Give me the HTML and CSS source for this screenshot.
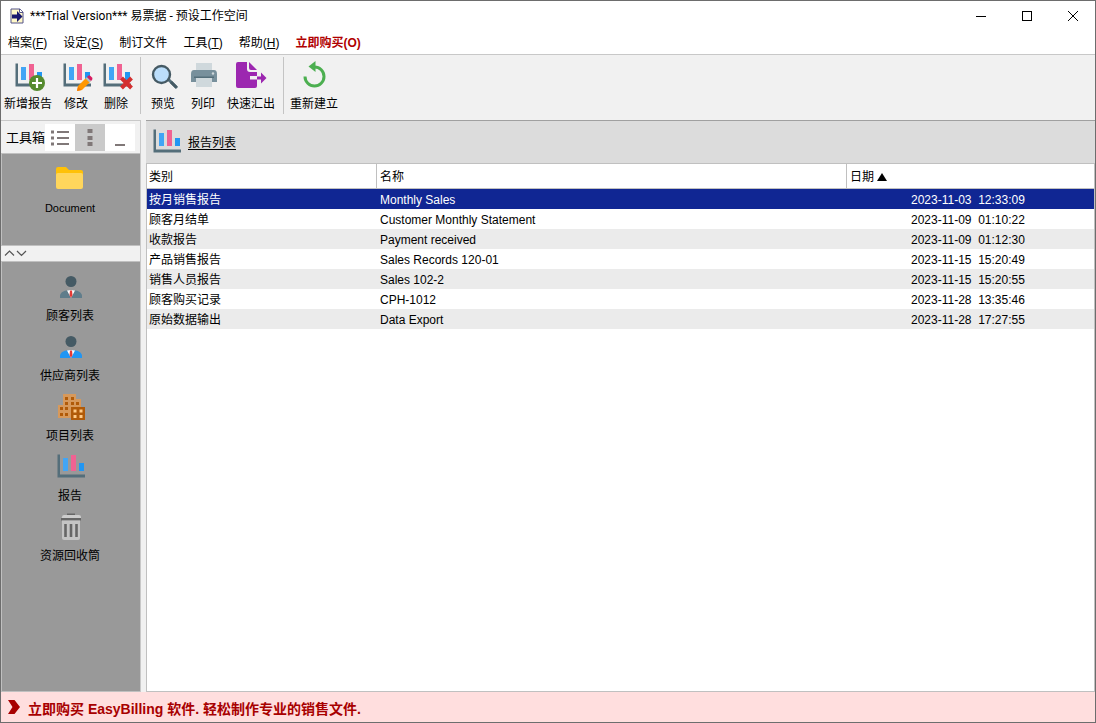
FILE: index.html
```
<!DOCTYPE html>
<html lang="zh-CN">
<head>
<meta charset="utf-8">
<title>易票据 - 预设工作空间</title>
<link rel="stylesheet" href="styles.css">
</head>
<body>
<svg class="symbols" aria-hidden="true">
  <symbol id="chart" viewBox="0 0 32 32">
    <rect x="9" y="7" width="5" height="13" fill="#42a5f5"/>
    <rect x="17" y="4" width="5" height="16" fill="#f06292"/>
    <rect x="25" y="12" width="5" height="8" fill="#2196f3"/>
    <path d="M3.500 3.500H6V23.500H31V26.500H3.500Z" fill="#546e7a"/>
  </symbol>
  <symbol id="person" viewBox="0 0 32 32">
    <circle cx="17" cy="10.500" r="5.500" fill="#455a64"/>
    <path d="M6 27V25C6 21 11 19 17 19S28 21 28 25V27Z" fill="currentColor"/>
    <path d="M13 19.500L17 27L21 19.500L17 19Z" fill="#fff"/>
    <path d="M16 19.500H18L18.500 24L17 27L15.500 24Z" fill="#e53935"/>
  </symbol>
</svg>
<div class="window">
  <header class="titlebar">
    <svg class="app-icon" viewBox="0 0 14 16"><path d="M1 1H10L13 4V15H1Z" fill="#fff8c8" stroke="#55558a"/><path d="M9.500 1V4.500H13" fill="#fff" stroke="#55558a"/><path d="M2 6.500H7V3L12.500 8.500L7 14V10.500H2Z" fill="#17176e"/></svg>
    <h1 class="title">***Trial Version*** 易票据 - 预设工作空间</h1>
    <button class="win-btn" aria-label="最小化"><svg viewBox="0 0 12 12"><path d="M1 6.500H11" stroke="#000"/></svg></button>
    <button class="win-btn" aria-label="最大化"><svg viewBox="0 0 12 12"><rect x="1.500" y="1.500" width="9" height="9" fill="none" stroke="#000"/></svg></button>
    <button class="win-btn" aria-label="关闭"><svg viewBox="0 0 12 12"><path d="M1 1L11 11M11 1L1 11" stroke="#000"/></svg></button>
  </header>
  <nav class="menu">
    <button>档案(<u>F</u>)</button>
    <button>设定(<u>S</u>)</button>
    <button>制订文件</button>
    <button>工具(<u>T</u>)</button>
    <button>帮助(<u>H</u>)</button>
    <button class="buy">立即购买(O)</button>
  </nav>
  <div class="toolbar">
    <div class="tools">
      <button class="wide"><svg class="icon" viewBox="0 0 32 32"><use href="#chart"/><circle cx="25" cy="23" r="8" fill="#558b2f"/><path d="M25 18V28M20 23H30" stroke="#fff" stroke-width="2.200"/></svg>新增报告</button>
      <button><svg class="icon" viewBox="0 0 32 32"><use href="#chart"/><path d="M17 31L18 26L26.500 17.500L30.500 21.500L22 30Z" fill="#ff9800"/><path d="M17 31L18 26.500L21.500 30Z" fill="#f57c00"/><path d="M25.500 18.500L27 17L31 21L29.500 22.500Z" fill="#b0bec5"/><path d="M27 17L28.500 15.500Q29.500 15 30.500 16L32 17.500Q33 18.500 32 20L31 21Z" fill="#d81b60"/></svg>修改</button>
      <button><svg class="icon" viewBox="0 0 32 32"><use href="#chart"/><path d="M21.500 18L31.500 28M31.500 18L21.500 28" stroke="#d32f2f" stroke-width="4"/></svg>删除</button>
    </div>
    <div class="tools">
      <button><svg class="icon" viewBox="0 0 32 32"><path d="M21 19L30 28" stroke="#546e7a" stroke-width="3"/><path d="M24 22L29.500 27.500" stroke="#455a64" stroke-width="3"/><circle cx="14.500" cy="14.500" r="8.500" fill="#bbdefb" stroke="#455a64" stroke-width="2.400"/></svg>预览</button>
      <button><svg class="icon" viewBox="0 0 32 32"><path d="M9 3H25V12H9Z" fill="#cfd8dc"/><path d="M4 14Q4 10 7 10H27Q30 10 30 14V22H4Z" fill="#78909c"/><path d="M9 18H25V27H9Z" fill="#cfd8dc"/><path d="M7 16.500H27V18H7Z" fill="#546e7a"/><circle cx="26" cy="13.500" r="1.200" fill="#cfd8dc"/></svg>列印</button>
      <button class="wide"><svg class="icon" viewBox="0 0 32 32"><path d="M3 2H12V9Q12 12 15 12H22V16H15V19.500H22V26Q22 28 20 28H3Q1 28 1 26V4Q1 2 3 2Z" fill="#9c27b0"/><path d="M14 2L22 10H16Q14 10 14 8Z" fill="#9c27b0"/><path d="M22 16.500H26V12.500L31.500 18L26 23.500V19.500H22Z" fill="#9c27b0"/></svg>快速汇出</button>
    </div>
    <div class="tools">
      <button class="wide"><svg class="icon" viewBox="0 0 32 32"><path d="M16.500 7A9.500 9.500 0 1 1 7 16.500" fill="none" stroke="#4caf50" stroke-width="3"/><path d="M17.500 1V12L10.500 6.500Z" fill="#4caf50"/></svg>重新建立</button>
    </div>
  </div>
  <div class="workspace">
    <aside class="sidebar">
      <div class="side-head">
        <span class="side-title">工具箱</span>
        <button aria-label="列表"><svg viewBox="0 0 18 16"><path d="M0 3H3M0 9H3M0 15H3" stroke="#807878" stroke-width="3"/><path d="M6 3H18M6 9H18M6 15H18" stroke="#807878" stroke-width="2"/></svg></button>
        <button class="on" aria-label="图标"><svg viewBox="0 0 18 16"><path d="M9 0V4M9 7V11M9 13V17" stroke="#807878" stroke-width="5"/></svg></button>
        <button aria-label="收起"><svg viewBox="0 0 18 16"><path d="M4 16H14" stroke="#807878" stroke-width="2"/></svg></button>
      </div>
      <div class="panel">
        <button class="item"><svg class="icon" viewBox="0 0 32 32"><path d="M2 6Q2 4 4 4H12L15 7H27Q29 7 29 9V18H2Z" fill="#ffc107"/><path d="M2 11.500Q2 10 4 10H27Q29 10 29 12V24Q29 26 27 26H4Q2 26 2 24Z" fill="#ffd65c"/></svg><span class="latin">Document</span></button>
      </div>
      <div class="splitter"><svg viewBox="0 0 24 8"><path d="M1 6.500L5.500 2L10 6.500M13 2L17.500 6.500L22 2" fill="none" stroke="#555" stroke-width="1.200"/></svg></div>
      <div class="panel grow">
        <button class="item gray"><svg class="icon"><use href="#person"/></svg>顾客列表</button>
        <button class="item blue"><svg class="icon"><use href="#person"/></svg>供应商列表</button>
        <button class="item"><svg class="icon" viewBox="0 0 32 32"><path d="M9 3H22V8H27V27H4V14H9Z" fill="#d7995b"/><path d="M17 16H31V29H17Z" fill="#b05a08"/><path d="M11 6H14V9H11ZM17 6H20V9H17ZM11 11H14V14H11ZM17 11H20V14H17ZM22 11H25V14H22ZM6 16H9V19H6ZM11 16H14V19H11ZM6 22H9V25H6ZM11 22H14V25H11Z" fill="#b05a08"/><path d="M19.500 18.500H22.500V21.500H19.500ZM25.500 18.500H28.500V21.500H25.500ZM19.500 24H22.500V27H19.500ZM25.500 24H28.500V27H25.500Z" fill="#ffca86"/></svg>项目列表</button>
        <button class="item"><svg class="icon"><use href="#chart"/></svg>报告</button>
        <button class="item"><svg class="icon" viewBox="0 0 32 32"><path d="M13 4.500V2.500H21V4.500" fill="#666"/><path d="M8 6Q8 4 10 4H25Q27 4 27 6V8H7Z" fill="#ccc"/><path d="M7 7H27V9.500H7Z" fill="#666"/><path d="M8 9.500H26V27Q26 29 24 29H10Q8 29 8 27Z" fill="#c4c4c4"/><path d="M11.500 13V26M17 13V26M22.500 13V26" stroke="#666" stroke-width="2.600"/></svg>资源回收筒</button>
      </div>
    </aside>
    <main class="main">
      <div class="list-head"><svg class="icon"><use href="#chart"/></svg><a href="#list">报告列表</a></div>
      <div class="list" id="list">
        <table>
          <colgroup><col class="c-type"><col class="c-name"><col></colgroup>
          <thead><tr><th>类别</th><th>名称</th><th>日期 <span class="sort"></span></th></tr></thead>
          <tbody>
            <tr class="selected"><td>按月销售报告</td><td>Monthly Sales</td><td>2023-11-03  12:33:09</td></tr>
            <tr><td>顾客月结单</td><td>Customer Monthly Statement</td><td>2023-11-09  01:10:22</td></tr>
            <tr><td>收款报告</td><td>Payment received</td><td>2023-11-09  01:12:30</td></tr>
            <tr><td>产品销售报告</td><td>Sales Records 120-01</td><td>2023-11-15  15:20:49</td></tr>
            <tr><td>销售人员报告</td><td>Sales 102-2</td><td>2023-11-15  15:20:55</td></tr>
            <tr><td>顾客购买记录</td><td>CPH-1012</td><td>2023-11-28  13:35:46</td></tr>
            <tr><td>原始数据输出</td><td>Data Export</td><td>2023-11-28  17:27:55</td></tr>
          </tbody>
        </table>
      </div>
    </main>
  </div>
  <footer class="promo"><svg viewBox="0 0 14 16"><path d="M1 0H7.500L13 7L7.500 14H1L5.500 7Z" fill="#a80000"/></svg><a href="#buy">立即购买 EasyBilling 软件. 轻松制作专业的销售文件.</a></footer>
</div>
</body>
</html>
```
FILE: styles.css
```
* { box-sizing: border-box; }
body {
  margin: 0;
  font: 12px/18px "Liberation Sans", "Noto Sans CJK SC", sans-serif;
  color: #000;
}
button {
  margin: 0;
  padding: 0;
  border: 0;
  background: none;
  font: inherit;
  color: inherit;
}
svg { display: block; flex: none; overflow: visible; }
.symbols { position: absolute; width: 0; height: 0; }
.icon { width: 32px; height: 32px; }

.window {
  display: flex;
  flex-direction: column;
  min-height: 100vh;
  background: #f1f1f1;
  outline: 1px solid #6d6d6d;
  outline-offset: -1px;
}

.titlebar { display: flex; align-items: center; height: 31px; padding-left: 10px; background: #fff; }
.app-icon { width: 14px; height: 16px; }
.title { flex: 1; margin: 0 0 0 6px; font: 12px/16px Roboto, "Noto Sans CJK SC", sans-serif; }
.win-btn { display: flex; justify-content: center; align-items: center; width: 46px; height: 30px; }
.win-btn svg { width: 12px; height: 12px; }

.menu { display: flex; gap: 16px; height: 24px; padding-left: 8px; background: #fff; border-bottom: 1px solid #c8c8c8; }
.buy { font-weight: bold; color: #b00000; }

.toolbar { display: flex; height: 65px; padding-top: 2px; }
.tools { display: flex; height: 57px; }
.tools + .tools { margin-left: 4px; padding-left: 2px; border-left: 1px solid #c4c4c4; }
.tools button {
  display: flex;
  flex-direction: column;
  align-items: center;
  gap: 3px;
  width: 40px;
  padding-top: 3px;
  white-space: nowrap;
}
.tools .wide { width: 56px; }

.workspace { display: flex; flex: 1; gap: 5px; padding: 0 1px; }
.sidebar { display: flex; flex-direction: column; width: 140px; border-top: 1px solid #c8c8c8; border-right: 1px solid #c8c8c8; }
.side-head { display: flex; align-items: center; height: 32px; padding-left: 5px; }
.side-title { padding-top: 2px; font-size: 13px; }
.side-head button { display: flex; justify-content: center; align-items: center; width: 30px; height: 27px; background: #fff; }
.side-head .on { background: #cacaca; }
.side-head svg { width: 18px; height: 16px; }
.panel { display: flex; flex-direction: column; gap: 6px; min-height: 93px; padding: 9px 2px 0 0; background: #999; border: 1px solid #c0c0c0; border-right: 0; }
.grow { flex: 1; }
.item { display: flex; flex-direction: column; align-items: center; gap: 4px; }
.latin { font-size: 11px; }
.gray svg { color: #607d8b; }
.blue svg { color: #2196f3; }
.splitter { height: 15px; padding: 3px 0 0 3px; }
.splitter svg { width: 24px; height: 8px; }

.main { display: flex; flex-direction: column; flex: 1; border-top: 1px solid #a0a0a0; }
.list-head { display: flex; align-items: center; gap: 6px; height: 42px; padding-left: 4px; background: #dcdcdc; }
.list-head a { padding-top: 2px; color: inherit; text-underline-offset: 2px; }
.list { flex: 1; background: #fff; border: 1px solid #c0c0c0; }
table { width: 100%; table-layout: fixed; border-collapse: separate; border-spacing: 0; }
.c-type { width: 230px; }
.c-name { width: 470px; }
th { height: 25px; padding: 2px 3px 0; font-weight: normal; text-align: left; border-bottom: 1px solid #c0c0c0; }
th:not(:last-child) { border-right: 1px solid #c0c0c0; }
td { height: 20px; padding: 2px 3px 0; white-space: pre; }
th:first-child, td:first-child { padding-left: 2px; }
td:last-child { padding-left: 64px; }
tbody tr:nth-child(odd) { background: #ebebeb; }
tbody tr.selected { background: #102693; color: #fff; }
.sort { display: inline-block; border: 5px solid transparent; border-top: 0; border-bottom: 8px solid #000; }

.promo { display: flex; align-items: center; gap: 7px; height: 31px; padding-left: 7px; background: #ffdede; font-size: 14px; font-weight: bold; }
.promo svg { width: 14px; height: 16px; }
.promo a { padding-top: 2px; color: #a80000; text-decoration: none; }
```
